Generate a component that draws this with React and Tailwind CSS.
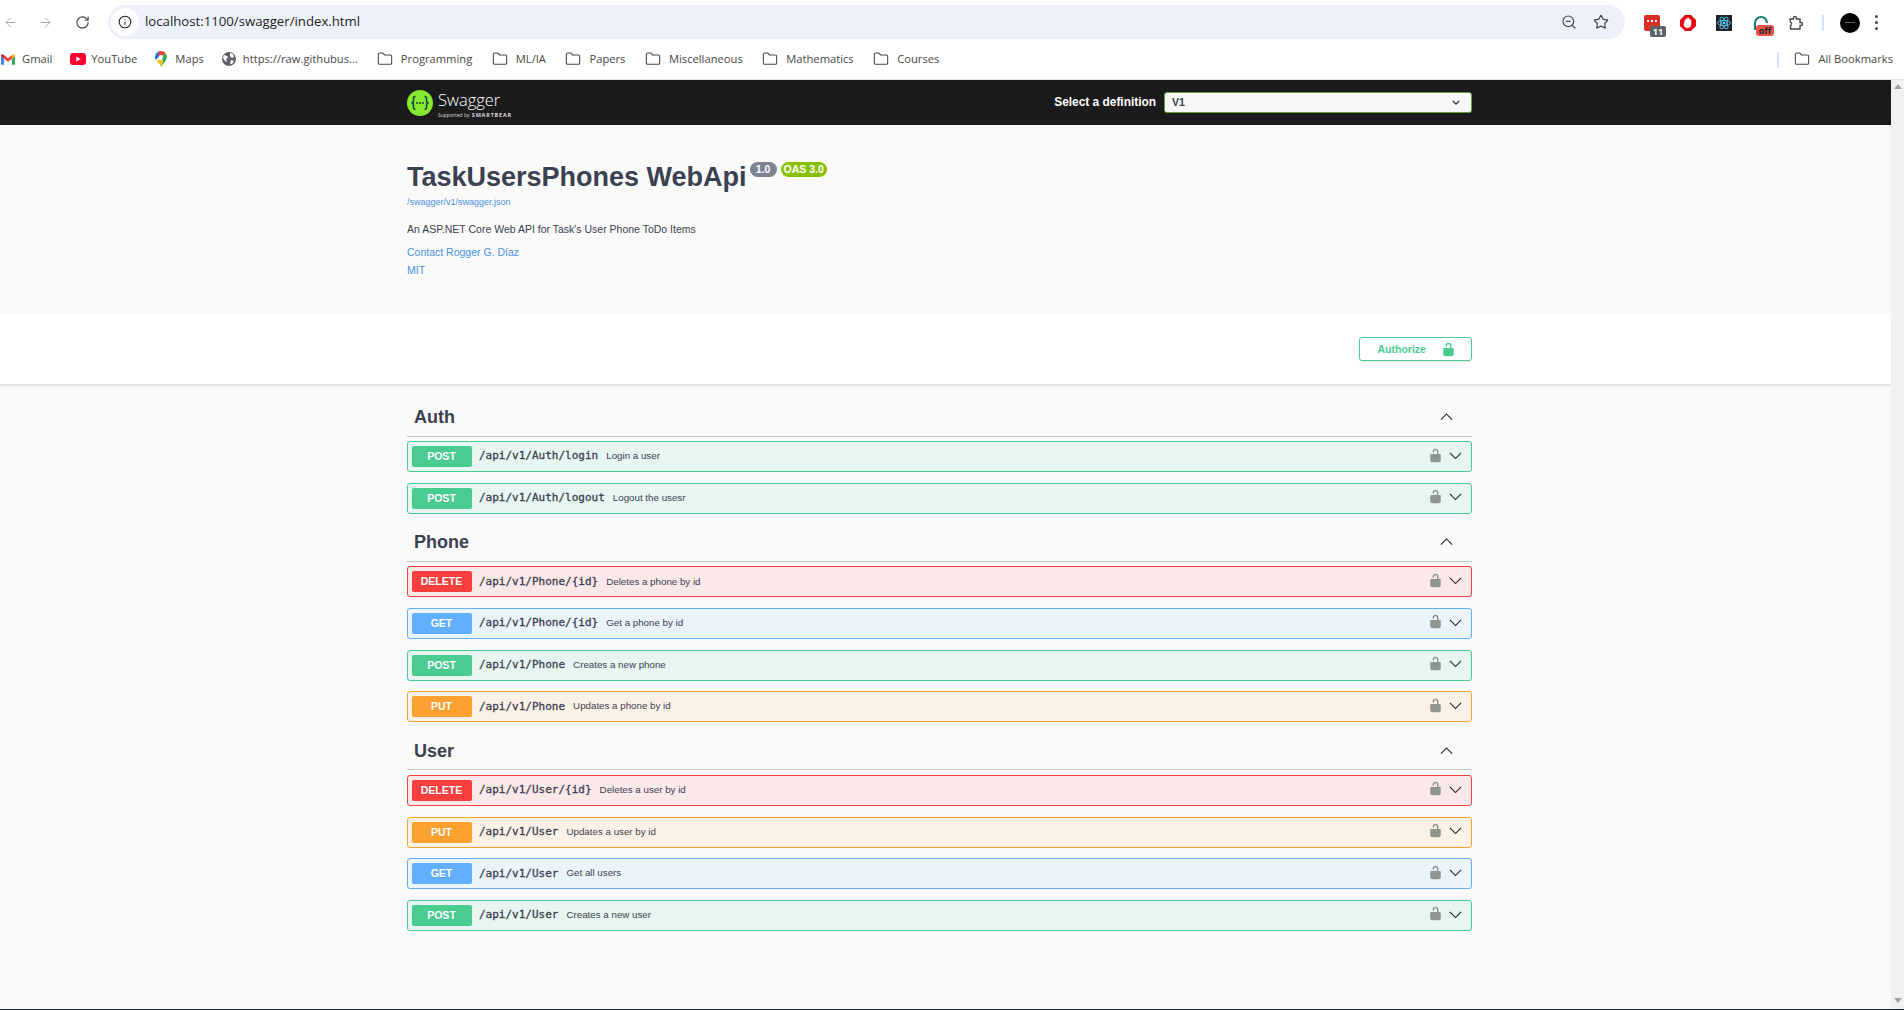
import { ArrowLeft, ArrowRight, RotateCw, Info, ZoomOut, Star, Folder } from 'lucide-react';

const tags = [
  {
    name: 'Auth',
    ops: [
      { method: 'POST', path: '/api/v1/Auth/login', summary: 'Login a user' },
      { method: 'POST', path: '/api/v1/Auth/logout', summary: 'Logout the usesr' },
    ],
  },
  {
    name: 'Phone',
    ops: [
      { method: 'DELETE', path: '/api/v1/Phone/{id}', summary: 'Deletes a phone by id' },
      { method: 'GET', path: '/api/v1/Phone/{id}', summary: 'Get a phone by id' },
      { method: 'POST', path: '/api/v1/Phone', summary: 'Creates a new phone' },
      { method: 'PUT', path: '/api/v1/Phone', summary: 'Updates a phone by id' },
    ],
  },
  {
    name: 'User',
    ops: [
      { method: 'DELETE', path: '/api/v1/User/{id}', summary: 'Deletes a user by id' },
      { method: 'PUT', path: '/api/v1/User', summary: 'Updates a user by id' },
      { method: 'GET', path: '/api/v1/User', summary: 'Get all users' },
      { method: 'POST', path: '/api/v1/User', summary: 'Creates a new user' },
    ],
  },
];

const methodStyles = {
  POST: { row: 'bg-[#e7f6f0] border-[#49cc90]', badge: 'bg-[#49cc90]' },
  DELETE: { row: 'bg-[#fbe8e8] border-[#f93e3e]', badge: 'bg-[#f93e3e]' },
  GET: { row: 'bg-[#ebf3fb] border-[#61affe]', badge: 'bg-[#61affe]' },
  PUT: { row: 'bg-[#fcf1e6] border-[#fca130]', badge: 'bg-[#fca130]' },
};

const bookmarks = [
  { label: 'Programming' },
  { label: 'ML/IA' },
  { label: 'Papers' },
  { label: 'Miscellaneous' },
  { label: 'Mathematics' },
  { label: 'Courses' },
];

const LockIcon = ({ className }) => (
  <svg viewBox="0 0 20 20" className={className} fill="currentColor">
    <path d="M15.8 8H14V5.6C14 2.703 12.665 1 10 1 7.334 1 6 2.703 6 5.6V6h2v-.801C8 3.754 8.797 3 10 3c1.203 0 2 .754 2 2.199V8H4c-.553 0-1 .646-1 1.199V17c0 .549.428 1.139.951 1.307l1.197.387C5.672 18.861 6.55 19 7.1 19h5.8c.549 0 1.428-.139 1.951-.307l1.196-.387c.524-.167.953-.757.953-1.306V9.199C17 8.646 16.352 8 15.8 8z" />
  </svg>
);

const Chevron = ({ up }) => (
  <svg viewBox="0 0 14 8" className="w-[13px] h-[7.5px]" fill="none" stroke="#1f2328" strokeWidth="1.2">
    <path d={up ? 'M1 7l6-6 6 6' : 'M1 1l6 6 6-6'} />
  </svg>
);

const FolderIcon = () => <Folder className="w-[16px] h-[16px] text-[#474747] shrink-0" strokeWidth={1.6} />;

const Browser = () => (
  <div className="bg-white h-[80px] border-b border-[#e3e3e3] shrink-0 [font-family:'Open_Sans',sans-serif]">
    {/* Toolbar */}
    <div className="h-[44px] flex items-center pt-[1px]">
      <ArrowLeft className="w-[15px] h-[15px] text-[#a9abae] ml-[3px]" strokeWidth={1.6} />
      <ArrowRight className="w-[15px] h-[15px] text-[#a9abae] ml-[20px]" strokeWidth={1.6} />
      <RotateCw className="w-[15px] h-[15px] text-[#44474a] ml-[22px]" strokeWidth={1.8} />
      <div className="ml-[18px] w-[1517px] h-[34px] rounded-full bg-[#edf2fa] flex items-center px-[3px] mb-[1px]">
        <div className="w-[28px] h-[28px] rounded-full bg-white flex items-center justify-center shrink-0">
          <Info className="w-[14px] h-[14px] text-[#1f1f1f]" strokeWidth={1.8} />
        </div>
        <span className="ml-[6px] text-[13.2px] text-[#1f1f1f]">localhost:1100/swagger/index.html</span>
        <ZoomOut className="w-[16px] h-[16px] text-[#44474a] ml-auto mr-[1px]" strokeWidth={1.8} />
        <Star className="w-[16px] h-[16px] text-[#44474a] ml-[15px] mr-[13px]" strokeWidth={1.8} />
      </div>
      <div className="flex items-center ml-[19px] relative">
        {/* Calendar style extension */}
        <div className="relative w-[16px] h-[16px] rounded-[2px] bg-[#d93025] flex justify-center pt-[5px] gap-[2px]">
          <span className="w-[2px] h-[2px] bg-white"></span>
          <span className="w-[2px] h-[2px] bg-white"></span>
          <span className="w-[2px] h-[2px] bg-white"></span>
          <div className="absolute left-[6px] top-[11px] w-[16px] h-[11px] rounded-[2px] bg-[#5f6368] text-white text-[9px] leading-[11px] font-bold text-center">11</div>
        </div>
        <svg viewBox="0 0 16 16" className="w-[16px] h-[16px] ml-[20px]">
          <path d="M5 0h6l5 5v6l-5 5H5l-5-5V5z" fill="#e30613" />
          <path d="M4.500 7V5a.9.9 0 0 1 1.700 0V3.500a.9.9 0 0 1 1.700 0a.9.9 0 0 1 1.700 0V5a.9.9 0 0 1 1.700 0v4c0 2-1.300 4-3.500 4S4 12 3.600 9.500z" fill="#fff" />
        </svg>
        <svg viewBox="0 0 16 16" className="w-[16px] h-[16px] ml-[20px]">
          <rect width="16" height="16" fill="#20232a" />
          <g fill="none" stroke="#61dafb" strokeWidth="0.8">
            <ellipse cx="8" cy="8" rx="6.500" ry="2.600" />
            <ellipse cx="8" cy="8" rx="6.500" ry="2.600" transform="rotate(60 8 8)" />
            <ellipse cx="8" cy="8" rx="6.500" ry="2.600" transform="rotate(120 8 8)" />
          </g>
          <circle cx="8" cy="8" r="1.300" fill="#61dafb" />
        </svg>
        <div className="relative w-[16px] h-[16px] ml-[21px]">
          <svg viewBox="0 0 16 16" className="w-[16px] h-[16px]">
            <path d="M2 15V8a6 6 0 0 1 12 0" fill="none" stroke="#14806a" strokeWidth="2.200" />
          </svg>
          <div className="absolute left-[3px] top-[10px] w-[18px] h-[11px] rounded-[3px] bg-[#e5534b] text-[#222] text-[9px] leading-[11px] font-bold text-center">off</div>
        </div>
        <svg viewBox="0 0 16 16" className="w-[16px] h-[16px] ml-[19px]" fill="none" stroke="#44474a" strokeWidth="1.400">
          <path d="M2 4h3.500V3a1.500 1.500 0 0 1 3 0v1H12v3.500h1a1.500 1.500 0 0 1 0 3h-1V14H2.500v-3.500a2 2 0 0 0 0-3.500z" />
        </svg>
        <div className="w-[2px] h-[16px] bg-[#d3e3fd] ml-[18px]"></div>
        <div className="w-[20px] h-[20px] rounded-full bg-black ml-[16px] flex items-center justify-center">
          <div className="w-[10px] h-[1px] bg-[#666]"></div>
        </div>
        <div className="flex flex-col gap-[3px] ml-[15px]">
          <span className="w-[3px] h-[3px] rounded-full bg-[#44474a]"></span>
          <span className="w-[3px] h-[3px] rounded-full bg-[#44474a]"></span>
          <span className="w-[3px] h-[3px] rounded-full bg-[#44474a]"></span>
        </div>
      </div>
    </div>
    {/* Bookmarks bar */}
    <div className="h-[31px] flex items-center text-[11.2px] text-[#474747] pl-[1px] pr-[11px] whitespace-nowrap">
      <div className="flex items-center gap-[18px]">
        <div className="flex items-center gap-[7px]">
          <svg viewBox="0 0 16 12" className="w-[14px] h-[11px]">
            <path d="M0 2v9a1 1 0 0 0 1 1h2.500V5z" fill="#4285f4" />
            <path d="M16 2v9a1 1 0 0 1-1 1h-2.500V5z" fill="#34a853" />
            <path d="M3.500 5L8 8.500 12.500 5V1L8 4.500 3.500 1z" fill="#ea4335" />
            <path d="M0 2l3.500 3V1L2 0C1 -.3 0 .7 0 2z" fill="#c5221f" />
            <path d="M16 2l-3.500 3V1L14 0c1-.3 2 .7 2 2z" fill="#fbbc04" />
          </svg>
          <span>Gmail</span>
        </div>
        <div className="flex items-center gap-[5px]">
          <svg viewBox="0 0 16 12" className="w-[16px] h-[12px]">
            <rect width="16" height="12" rx="3" fill="#ff0033" />
            <path d="M6.300 3.500L10.500 6l-4.200 2.500z" fill="#fff" />
          </svg>
          <span>YouTube</span>
        </div>
        <div className="flex items-center gap-[8px]">
          <svg viewBox="0 0 12 16" className="w-[12px] h-[16px]">
            <path d="M6 0a6 6 0 0 0-6 6c0 1.200.400 2.200 1 3l5-6z" fill="#1a73e8" />
            <path d="M1 9l3.500 4C5 14 5.600 15 6 16l2-6-2-1z" fill="#fbbc04" />
            <path d="M6 0c1.800 0 3.500.800 4.600 2.200L6 6 3 4a4 4 0 0 1 3-4z" fill="#ea4335" />
            <path d="M10.600 2.200A6 6 0 0 1 11 9l-5 7c.4-2 2-4 2-6l-2-4z" fill="#34a853" />
            <circle cx="6" cy="6" r="2" fill="#fff" />
          </svg>
          <span>Maps</span>
        </div>
        <div className="flex items-center gap-[7px] mr-[1px]">
          <svg viewBox="0 0 14 14" className="w-[14px] h-[14px]">
            <circle cx="7" cy="7" r="7" fill="#5f6368" />
            <path d="M2 3l3 1 1 2-2 1 1 3-2-1-2-3zM8 1l3 1 1 3-2 1-2-2zM9 8l3 1-2 3-2 0z" fill="#fff" />
          </svg>
          <span>https://raw.githubus...</span>
        </div>
        {bookmarks.map(b => (
          <div key={b.label} className="flex items-center gap-[8px] mr-[1.5px]">
            <FolderIcon />
            <span>{b.label}</span>
          </div>
        ))}
      </div>
      <div className="w-[2px] h-[16px] bg-[#d3e3fd] ml-auto"></div>
      <div className="flex items-center gap-[8px] ml-[15px]">
        <FolderIcon />
        <span>All Bookmarks</span>
      </div>
    </div>
  </div>
);

const Logo = () => (
  <div className="flex items-center">
    <svg viewBox="0 0 26 26" className="w-[26px] h-[26px]">
      <circle cx="13" cy="13" r="13" fill="#85ea2d" />
      <g fill="none" stroke="#173647" strokeWidth="1.500">
        <path d="M8.500 6.500c-2.500 0-2 2-2 4 0 1.500-.500 2.500-2 2.500 1.500 0 2 1 2 2.500 0 2-.500 4 2 4" />
        <path d="M17.500 6.500c2.500 0 2 2 2 4 0 1.500.500 2.500 2 2.500-1.500 0-2 1-2 2.500 0 2 .500 4-2 4" />
      </g>
      <g fill="#173647">
        <circle cx="10" cy="13" r="1" />
        <circle cx="13" cy="13" r="1" />
        <circle cx="16" cy="13" r="1" />
      </g>
    </svg>
    <div className="ml-[5px] flex flex-col pt-[4px]">
      <span className="text-[16.5px] leading-[20px] font-light text-white [font-family:'Open_Sans',sans-serif]">Swagger</span>
      <span className="mt-[1.5px] text-[5px] leading-[7px] text-[#ddd] whitespace-nowrap [font-family:'Open_Sans',sans-serif]">
        Supported by <span className="font-bold text-[5.500px] tracking-[0.8px] ml-[1px]">SMARTBEAR</span>
      </span>
    </div>
  </div>
);

const Operation = ({ op }) => {
  const style = methodStyles[op.method];
  return (
    <div className={`h-[31px] mb-[10.67px] flex items-center border-[1.5px] rounded-[3px] ${style.row} pl-[3.500px] pr-[9px]`}>
      <div className={`w-[60px] h-[21px] rounded-[2px] flex items-center justify-center pt-[1px] text-white font-bold text-[10.5px] [text-shadow:0_1px_0_rgba(0,0,0,0.1)] ${style.badge}`}>
        {op.method}
      </div>
      <span className="ml-[7.500px] text-[#3b4151] text-[11px] [-webkit-text-stroke:0.3px_#3b4151] [font-family:'DejaVu_Sans_Mono',monospace]">{op.path}</span>
      <span className="ml-[8px] text-[#3b4151] text-[9.75px]">{op.summary}</span>
      <LockIcon className="w-[15px] h-[15px] text-[#8f958f] ml-auto mb-[3px]" />
      <div className="ml-[6px] mb-[2px] flex">
        <Chevron />
      </div>
    </div>
  );
};

const Tag = ({ tag }) => (
  <section>
    <div className="h-[37.5px] flex items-center justify-between border-b border-[#c4c5c9] pl-[7px] pr-[19px] mb-[4.5px]">
      <h3 className="text-[18px] font-bold text-[#3b4151]">{tag.name}</h3>
      <div className="flex mb-[1px]">
        <Chevron up />
      </div>
    </div>
    {tag.ops.map(op => (
      <Operation key={op.method + op.path} op={op} />
    ))}
  </section>
);

export default function App() {
  return (
    <div className="h-[1010px] w-[1904px] overflow-hidden flex flex-col bg-white [font-family:'Liberation_Sans',Arial,sans-serif]">
      <Browser />
      <div className="flex flex-1 min-h-0">
        <main className="flex-1 min-w-0 bg-[#fafafa] flex flex-col">
          {/* Topbar */}
          <div className="h-[45px] bg-[#1b1b1b] pl-[407px] pr-[419px] flex items-center justify-between shrink-0">
            <Logo />
            <div className="flex items-center">
              <span className="text-white font-bold text-[11.9px]">Select a definition</span>
              <div className="ml-[8px] w-[308px] h-[21px] rounded-[3px] border-[1.5px] border-[#62a03f] bg-[#f7f7f7] flex items-center justify-between pl-[7px] pr-[11px]">
                <span className="font-bold text-[10.5px] text-[#3b4151]">V1</span>
                <svg viewBox="0 0 10 6" className="w-[8px] h-[5px]" fill="none" stroke="#222" strokeWidth="1.500">
                  <path d="M1 1l4 4 4-4" />
                </svg>
              </div>
            </div>
          </div>

          {/* Info */}
          <div className="h-[189px] shrink-0 pl-[407px] pt-[36px]">
            <div className="flex items-start">
              <h2 className="text-[27px] leading-[32px] font-bold text-[#3b4151]">TaskUsersPhones WebApi</h2>
              <span className="ml-[3px] mt-[1px] h-[15px] w-[27px] rounded-[8px] bg-[#7d8492] text-white font-bold text-[10.5px] leading-[15px] text-center">1.0</span>
              <span className="ml-[4px] mt-[1px] h-[15px] w-[46px] rounded-[8px] bg-[#89bf04] text-white font-bold text-[10.5px] leading-[15px] text-center">OAS 3.0</span>
            </div>
            <div className="text-[9px] leading-[11px] text-[#4990e2] mt-[4px]">/swagger/v1/swagger.json</div>
            <p className="text-[10.5px] leading-[12px] text-[#3b4151] mt-[15px]">An ASP.NET Core Web API for Task's User Phone ToDo Items</p>
            <div className="text-[10.5px] leading-[12px] text-[#4990e2] mt-[11px]">Contact Rogger G. Díaz</div>
            <div className="text-[10.5px] leading-[12px] text-[#4990e2] mt-[6px]">MIT</div>
          </div>

          {/* Authorize band */}
          <div className="h-[71px] shrink-0 bg-white border-b border-[#e2e2e2] shadow-[0_1px_2px_rgba(0,0,0,0.08)] pr-[419px] flex justify-end pt-[23px]">
            <div className="w-[113px] h-[24px] rounded-[3px] border-[1.5px] border-[#49cc90] flex items-center pl-[17.5px] shadow-[0_1px_2px_rgba(0,0,0,0.1)]">
              <span className="font-bold text-[10.5px] text-[#49cc90] pt-[2px]">Authorize</span>
              <LockIcon className="w-[15px] h-[15px] text-[#49cc90] ml-[15px]" />
            </div>
          </div>

          {/* Operations */}
          <div className="ml-[407px] w-[1065px] pt-[14px]">
            {tags.map(tag => (
              <Tag key={tag.name} tag={tag} />
            ))}
          </div>
        </main>

        {/* Scrollbar */}
        <div className="w-[13px] bg-[#f1f1f1] flex flex-col items-center justify-between py-[3px] shrink-0">
          <div className="w-0 h-0 border-x-[4px] border-x-transparent border-b-[5px] border-b-[#a3a3a3] mt-[1px]"></div>
          <div className="w-0 h-0 border-x-[4px] border-x-transparent border-t-[5px] border-t-[#a3a3a3] mb-[3px]"></div>
        </div>
      </div>
      <div className="h-[1px] bg-[#202836] shrink-0"></div>
    </div>
  );
}
